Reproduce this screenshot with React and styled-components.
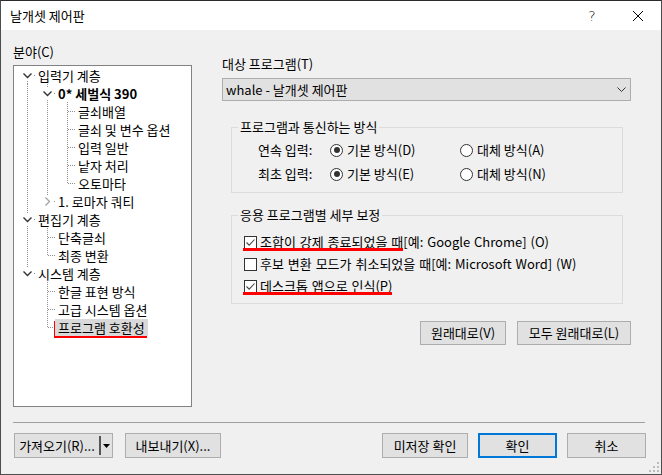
import React from 'react';
import styled, { createGlobalStyle } from 'styled-components';

const GlobalStyle = createGlobalStyle`
  html, body { margin: 0; padding: 0; background: #fff; }
  body {
    font-family: "Noto Sans CJK KR", "Noto Sans", sans-serif;
    font-size: 13px;
    color: #000;
  }
  * { box-sizing: border-box; }
`;

const Window = styled.div`
  position: relative;
  width: 662px;
  height: 475px;
  border: 1px solid #4d4d4d;
  border-top-color: #2b2b2b;
  background: #f0f0f0;
  display: flex;
  flex-direction: column;
`;

const TitleBar = styled.div`
  height: 29px;
  background: #fff;
  display: flex;
  align-items: center;
  padding-left: 9px;
`;

const Title = styled.div`
  flex: 1;
  line-height: 16px;
`;

const CaptionButton = styled.div`
  width: 46px;
  height: 29px;
  display: flex;
  align-items: center;
  justify-content: center;
  font-family: "DejaVu Sans", sans-serif;
  font-size: 14px;
  font-weight: 300;
`;

const Main = styled.div`
  height: 392px;
  display: flex;
  align-items: flex-start;
`;

const LeftCol = styled.div`
  padding: 14px 0 0 12px;
  display: flex;
  flex-direction: column;
  gap: 5px;
`;

const FieldLabel = styled.div`
  line-height: 16px;
`;

const TreeBox = styled.div`
  width: 179px;
  height: 342px;
  border: 1px solid #828282;
  background: #fff;
  padding-left: 1px;
  display: flex;
  flex-direction: column;
`;

const TreeRow = styled.div`
  height: 18px;
  display: flex;
  align-items: center;
`;

const GuideSvg = styled.svg`
  flex: none;
  display: block;
  line { stroke: #8f8f8f; stroke-width: 1; stroke-dasharray: 1 1; shape-rendering: crispEdges; }
`;

const TreeLabel = styled.span`
  position: relative;
  padding: 0 3px;
  height: 17px;
  line-height: 17px;
  white-space: nowrap;
  font-weight: ${p => (p.$bold ? 700 : 400)};
  background: ${p => (p.$selected ? '#d9d9d9' : 'transparent')};
  box-shadow: ${p => (p.$selected ? '-1px 2px 0 #ff0000' : 'none')};
`;

const RightCol = styled.div`
  margin-left: 30px;
  width: 409px;
  padding-top: 26px;
  display: flex;
  flex-direction: column;
`;

const Combo = styled.div`
  margin-top: 6px;
  height: 23px;
  border: 1px solid #adadad;
  background: #e1e1e1;
  display: flex;
  align-items: center;
  justify-content: space-between;
  padding: 0 4px 0 3px;
  line-height: 16px;
`;

const Group = styled.fieldset`
  margin: ${p => p.$top}px 0 0 9px;
  width: 392px;
  min-inline-size: 0;
  border: 1px solid #dcdcdc;
  padding: 0;
`;

const Legend = styled.legend`
  margin-left: 6px;
  padding: 0 2px;
  line-height: 16px;
`;

const GroupBody = styled.div`
  padding: ${p => p.$pad};
`;

const RadioRow = styled.div`
  height: 24px;
  display: flex;
  align-items: center;
`;

const RowLabel = styled.span`
  width: 72px;
  line-height: 16px;
`;

const Option = styled.label`
  width: ${p => p.$w || 'auto'};
  display: flex;
  align-items: center;
  gap: 4px;
  line-height: 16px;
`;

const RadioCircle = styled.span`
  width: 13px;
  height: 13px;
  border: 1px solid #333;
  border-radius: 50%;
  background: #fff;
  display: flex;
  align-items: center;
  justify-content: center;
  flex: none;
`;

const RadioDot = styled.span`
  width: 6px;
  height: 6px;
  border-radius: 50%;
  background: #333;
`;

const CheckRow = styled.div`
  height: 22px;
  display: flex;
  align-items: center;
  white-space: nowrap;
  line-height: 16px;
  word-spacing: 1px;
`;

const Marked = styled.span`
  position: relative;
  display: inline-flex;
  align-items: center;
  gap: 3px;

  &::after {
    content: '';
    display: ${p => (p.$on ? 'block' : 'none')};
    position: absolute;
    left: -1px;
    right: 0;
    top: calc(50% + 6px);
    height: 3px;
    background: #ff0000;
  }
`;

const CheckBoxBox = styled.span`
  width: 13px;
  height: 13px;
  border: 1px solid #333;
  background: #fff;
  display: flex;
  align-items: center;
  justify-content: center;
  flex: none;
`;

const ButtonRow = styled.div`
  margin-top: 17px;
  display: flex;
  justify-content: flex-end;
  gap: 11px;
`;

const Button = styled.div`
  width: ${p => p.$w}px;
  height: ${p => p.$h || 25}px;
  border: ${p => (p.$primary ? '2px solid #0078d7' : '1px solid #adadad')};
  background: #e1e1e1;
  display: flex;
  align-items: center;
  justify-content: center;
  line-height: 16px;
  white-space: nowrap;
`;

const SplitButton = styled.div`
  width: 99px;
  height: 25px;
  border: 1px solid #adadad;
  background: #e1e1e1;
  display: flex;
  align-items: stretch;
`;

const SplitMain = styled.div`
  flex: 1;
  display: flex;
  align-items: center;
  justify-content: center;
  line-height: 16px;
  white-space: nowrap;
`;

const SplitArrow = styled.div`
  width: 13px;
  margin: 2px 0;
  border-left: 2px solid #555;
  display: flex;
  align-items: center;
  justify-content: center;
`;

const Separator = styled.div`
  height: 1px;
  margin: 0 16px 0 12px;
  background: #a0a0a0;
`;

const Footer = styled.div`
  height: 51px;
  padding: 10px 15px 0 13px;
  display: flex;
  align-items: flex-start;
  gap: 10px;
`;

const Spacer = styled.div`
  flex: 1;
`;

const Grip = styled.svg`
  position: absolute;
  right: 2px;
  bottom: 2px;
`;

const tree = [
  { label: '입력기 계층', guides: ['first'], toggle: 'open' },
  { label: '0* 세벌식 390', guides: ['pipe', 'tee'], toggle: 'open', bold: true },
  { label: '글쇠배열', guides: ['pipe', 'pipe', 'tee'] },
  { label: '글쇠 및 변수 옵션', guides: ['pipe', 'pipe', 'tee'] },
  { label: '입력 일반', guides: ['pipe', 'pipe', 'tee'] },
  { label: '낱자 처리', guides: ['pipe', 'pipe', 'tee'] },
  { label: '오토마타', guides: ['pipe', 'pipe', 'elbow'] },
  { label: '1. 로마자 쿼티', guides: ['pipe', 'elbow'], toggle: 'closed' },
  { label: '편집기 계층', guides: ['tee'], toggle: 'open' },
  { label: '단축글쇠', guides: ['pipe', 'tee'] },
  { label: '최종 변환', guides: ['pipe', 'elbow'] },
  { label: '시스템 계층', guides: ['elbow'], toggle: 'open' },
  { label: '한글 표현 방식', guides: ['blank', 'tee'] },
  { label: '고급 시스템 옵션', guides: ['blank', 'tee'] },
  { label: '프로그램 호환성', guides: ['blank', 'elbow'], selected: true },
];

const vertical = { pipe: [0, 18], tee: [0, 18], elbow: [0, 9], first: [9, 18] };

function Guide({ kind, toggle }) {
  const v = vertical[kind];
  const hasH = kind !== 'pipe' && kind !== 'blank';
  return (
    <GuideSvg width="20" height="18" viewBox="0 0 20 18">
      {v && <line x1="12.5" y1={v[0]} x2="12.5" y2={v[1]} />}
      {hasH && <line x1="13" y1="9.5" x2="20" y2="9.5" />}
      {toggle && <rect x="6" y="3" width="12" height="12" fill="#fff" />}
      {toggle === 'open' && (
        <path d="M8.5 7.5 L12.5 11.5 L16.5 7.5" fill="none" stroke="#333" strokeWidth="1.4" />
      )}
      {toggle === 'closed' && (
        <path d="M10.5 5.5 L14.5 9.5 L10.5 13.5" fill="none" stroke="#a6a6a6" strokeWidth="1.4" />
      )}
    </GuideSvg>
  );
}

function Radio({ checked, children, w }) {
  return (
    <Option $w={w}>
      <RadioCircle>{checked && <RadioDot />}</RadioCircle>
      {children}
    </Option>
  );
}

function CheckBox({ checked }) {
  return (
    <CheckBoxBox>
      {checked && (
        <svg width="11" height="11" viewBox="0 0 11 11">
          <path d="M1.5 5.5 L4.2 8.2 L9.5 2.5" fill="none" stroke="#444" strokeWidth="1.1" />
        </svg>
      )}
    </CheckBoxBox>
  );
}

export default function App() {
  return (
    <>
      <GlobalStyle />
      <Window>
        <TitleBar>
          <Title>날개셋 제어판</Title>
          <CaptionButton>?</CaptionButton>
          <CaptionButton>
            <svg width="10" height="10" viewBox="0 0 10 10">
              <path d="M0 0 L10 10 M10 0 L0 10" stroke="#000" strokeWidth="1" />
            </svg>
          </CaptionButton>
        </TitleBar>

        <Main>
          <LeftCol>
            <FieldLabel>분야(C)</FieldLabel>
            <TreeBox>
              {tree.map(item => (
                <TreeRow key={item.label}>
                  {item.guides.map((g, i) => (
                    <Guide
                      key={i}
                      kind={g}
                      toggle={i === item.guides.length - 1 ? item.toggle : undefined}
                    />
                  ))}
                  <TreeLabel $bold={item.bold} $selected={item.selected}>
                    {item.label}
                  </TreeLabel>
                </TreeRow>
              ))}
            </TreeBox>
          </LeftCol>

          <RightCol>
            <FieldLabel>대상 프로그램(T)</FieldLabel>
            <Combo>
              <span>whale - 날개셋 제어판</span>
              <svg width="9" height="5" viewBox="0 0 9 5">
                <path d="M0.5 0.5 L4.5 4.5 L8.5 0.5" fill="none" stroke="#333" strokeWidth="1" />
              </svg>
            </Combo>

            <Group $top={18}>
              <Legend>프로그램과 통신하는 방식</Legend>
              <GroupBody $pad="3px 0 6px 26px">
                <RadioRow>
                  <RowLabel>연속 입력:</RowLabel>
                  <Radio checked w="130px">기본 방식(D)</Radio>
                  <Radio>대체 방식(A)</Radio>
                </RadioRow>
                <RadioRow>
                  <RowLabel>최초 입력:</RowLabel>
                  <Radio checked w="130px">기본 방식(E)</Radio>
                  <Radio>대체 방식(N)</Radio>
                </RadioRow>
              </GroupBody>
            </Group>

            <Group $top={14}>
              <Legend>응용 프로그램별 세부 보정</Legend>
              <GroupBody $pad="8px 0 6px 12px">
                <CheckRow>
                  <Marked $on>
                    <CheckBox checked />
                    <span>조합이 강제 종료되었을 때</span>
                  </Marked>
                  <span>[예: Google Chrome] (O)</span>
                </CheckRow>
                <CheckRow>
                  <Marked>
                    <CheckBox />
                    <span>후보 변환 모드가 취소되었을 때</span>
                  </Marked>
                  <span>[예: Microsoft Word] (W)</span>
                </CheckRow>
                <CheckRow>
                  <Marked $on>
                    <CheckBox checked />
                    <span>데스크톱 앱으로 인식(P)</span>
                  </Marked>
                </CheckRow>
              </GroupBody>
            </Group>

            <ButtonRow>
              <Button $w={86} $h={24}>원래대로(V)</Button>
              <Button $w={114} $h={24}>모두 원래대로(L)</Button>
            </ButtonRow>
          </RightCol>
        </Main>

        <Separator />

        <Footer>
          <SplitButton>
            <SplitMain>가져오기(R)...</SplitMain>
            <SplitArrow>
              <svg width="7" height="4" viewBox="0 0 7 4">
                <polygon points="0,0 7,0 3.5,4" fill="#000" />
              </svg>
            </SplitArrow>
          </SplitButton>
          <Button $w={96} style={{ marginLeft: 2 }}>내보내기(X)...</Button>
          <Spacer />
          <Button $w={86}>미저장 확인</Button>
          <Button $w={79} $primary>확인</Button>
          <Button $w={79}>취소</Button>
        </Footer>

        <Grip width="10" height="10" viewBox="0 0 10 10">
          {[[8, 0], [8, 4], [4, 4], [8, 8], [4, 8], [0, 8]].map(([x, y]) => (
            <rect key={`${x}-${y}`} x={x} y={y} width="2" height="2" fill="#bcbcbc" />
          ))}
        </Grip>
      </Window>
    </>
  );
}
